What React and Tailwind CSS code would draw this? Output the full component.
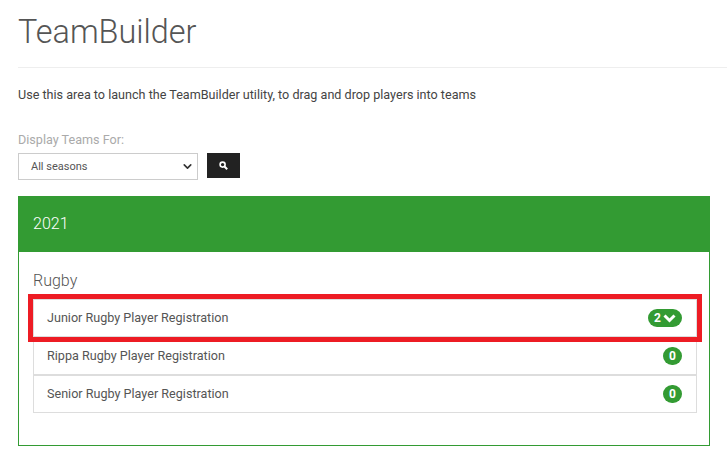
import { ChevronDown } from "lucide-react";

const rows = [
  { name: "Junior Rugby Player Registration", count: 2, open: true },
  { name: "Rippa Rugby Player Registration", count: 0 },
  { name: "Senior Rugby Player Registration", count: 0 },
];

export default function App() {
  return (
    <div className="h-[461px] w-[727px] overflow-hidden bg-white font-['Roboto',sans-serif] text-[#555]">
      <div className="ml-[18px] flex h-[68px] items-start border-b border-[#eee] pt-[12px]">
        <h1 className="text-[32.4px] leading-[40px] font-light text-[#555]">TeamBuilder</h1>
      </div>

      <div className="mr-[17px] ml-[18px]">
        <p className="mt-[18px] text-[12.6px] leading-[18px] text-[#444]">
          Use this area to launch the TeamBuilder utility, to drag and drop players into teams
        </p>

        <label className="mt-[27px] block text-[12.6px] leading-[18px] text-[#aaa]">Display Teams For:</label>
        <div className="mt-[4px] flex items-start gap-[9px]">
          <div className="flex h-[27px] w-[180px] items-center justify-between border border-[#ccc] pr-[3px] pl-[12px] text-[11px] text-[#555]">
            <span className="pt-[2px]">All seasons</span>
            <ChevronDown size={13} strokeWidth={3} className="text-[#333]" />
          </div>
          <button className="flex h-[25px] w-[33px] items-center justify-center bg-[#222] text-white">
            <svg width="9" height="9" viewBox="0 0 9 9" fill="none" stroke="currentColor">
              <circle cx="3.6" cy="3.6" r="2.5" strokeWidth="1.6" />
              <path d="M5.5 5.5L8.2 8.2" strokeWidth="2" />
            </svg>
          </button>
        </div>

        <div className="mt-[16px] h-[250px] border border-[#339b33]">
          <div className="-mx-px -mt-px flex h-[56px] items-center bg-[#339b33] pl-[15px] text-[16px] font-light text-white">
            2021
          </div>
          <div className="px-[14px]">
            <h3 className="mt-[19px] text-[16px] leading-[20px] font-light text-[#555]">Rugby</h3>
            <ul className="mt-[8px] mr-[-2px]">
              {rows.map((row) => (
                <li
                  key={row.name}
                  className={
                    "flex h-[38px] items-center justify-between border border-[#ddd] pr-[14px] pl-[13px] text-[12.6px] text-[#555]" +
                    (row.open ? " relative z-10 outline-[5px] outline-[#ed1c24]" : "")
                  }
                >
                  <span>{row.name}</span>
                  <span className="flex h-[18px] min-w-[19px] items-center justify-center gap-[2px] rounded-full bg-[#339b33] px-[6px] text-[12px] font-bold text-white">
                    {row.count}
                    {row.open && (
                      <svg width="13" height="10" viewBox="0 0 13 10" fill="none" stroke="currentColor" strokeWidth="3">
                        <path d="M1.5 2.5L6.5 7.5L11.5 2.5" />
                      </svg>
                    )}
                  </span>
                </li>
              ))}
            </ul>
          </div>
        </div>
      </div>
    </div>
  );
}
